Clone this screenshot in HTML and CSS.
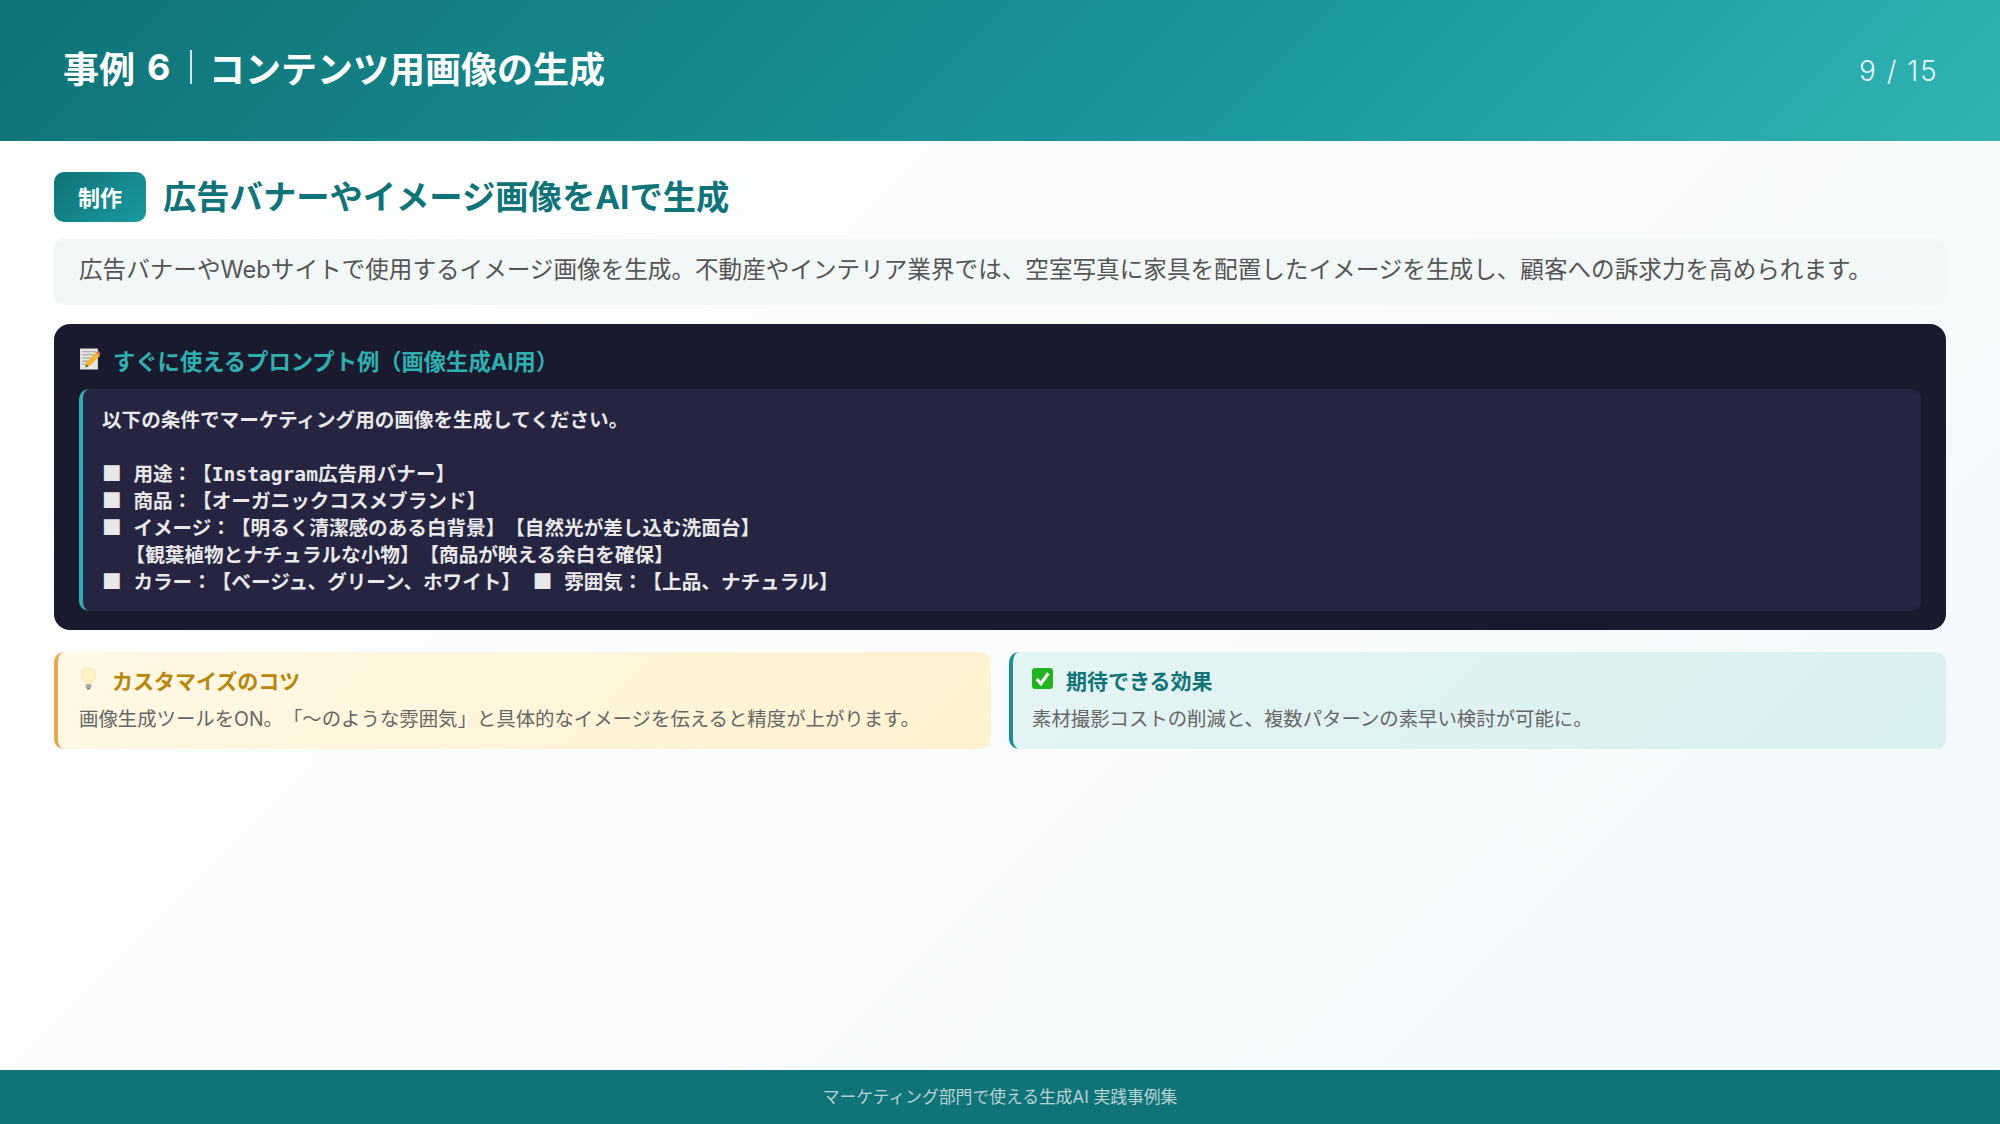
FILE: index.html
```html
<!DOCTYPE html>
<html lang="ja">
<head>
    <meta charset="UTF-8">
    <title>事例 6 | コンテンツ用画像の生成</title>
    <link rel="stylesheet" href="styles.css">
</head>
<body>
    <header class="header">
        <h1 class="slide-title">事例 <span class="num">6</span><span class="sep"></span>コンテンツ用画像の生成</h1>
        <div class="page-num">9 / 15</div>
    </header>

    <main class="content">
        <div class="case-head">
            <span class="badge">制作</span>
            <h2>広告バナーやイメージ画像をAIで生成</h2>
        </div>
        <p class="desc">広告バナーやWebサイトで使用するイメージ画像を生成。不動産やインテリア業界では、空室写真に家具を配置したイメージを生成し、顧客への訴求力を高められます。</p>

        <section class="prompt">
            <div class="prompt-title">
                <svg class="icon-memo" viewBox="0 0 20 20">
                    <rect x="1" y="0" width="17" height="20" fill="#e4e4e0"/>
                    <path d="M3 3h13M3 6h13M3 9h9M3 12h6M3 15h4" stroke="#9a9a9a" stroke-width="1"/>
                    <path d="M6 18l1-5L16 4l4 3-9 9z" fill="#f2b632"/>
                    <path d="M16 4l2-2 3 3-1 2z" fill="#e0705a"/>
                    <path d="M6 18l1-3 2 2z" fill="#4a4a4a"/>
                </svg>
                すぐに使えるプロンプト例（画像生成AI用）
            </div>
            <div class="prompt-body">
                <div class="line">以下の条件でマーケティング用の画像を生成してください。</div>
                <div class="line"></div>
                <div class="line"><span class="sq">■</span> 用途：【Instagram広告用バナー】</div>
                <div class="line"><span class="sq">■</span> 商品：【オーガニックコスメブランド】</div>
                <div class="line"><span class="sq">■</span> イメージ：【明るく清潔感のある白背景】【自然光が差し込む洗面台】</div>
                <div class="line">  【観葉植物とナチュラルな小物】【商品が映える余白を確保】</div>
                <div class="line"><span class="sq">■</span> カラー：【ベージュ、グリーン、ホワイト】 <span class="sq">■</span> 雰囲気：【上品、ナチュラル】</div>
            </div>
        </section>

        <div class="cards">
            <div class="card card-tip">
                <div class="card-title">
                    <svg class="icon-bulb" viewBox="0 0 20 24">
                        <path d="M10 1a7.500 7.500 0 0 0-4.500 13.500c1 1 1.500 2 1.500 3.500h6c0-1.500.5-2.500 1.500-3.500A7.500 7.500 0 0 0 10 1z" fill="#fdf3c4" stroke="#efe3a6" stroke-width=".8"/>
                        <rect x="7" y="18" width="6" height="4" rx="1" fill="#a5a5a5"/>
                        <rect x="8.500" y="22" width="3" height="1.500" fill="#777"/>
                    </svg>
                    カスタマイズのコツ
                </div>
                <p>画像生成ツールをON。「〜のような雰囲気」と具体的なイメージを伝えると精度が上がります。</p>
            </div>
            <div class="card card-effect">
                <div class="card-title">
                    <svg class="icon-check" viewBox="0 0 20 20">
                        <rect x="0" y="0" width="20" height="20" rx="3" fill="#22b322"/>
                        <path d="M4.500 10.500l4 4.500 7-10" fill="none" stroke="#fff" stroke-width="3"/>
                    </svg>
                    期待できる効果
                </div>
                <p>素材撮影コストの削減と、複数パターンの素早い検討が可能に。</p>
            </div>
        </div>
    </main>

    <footer class="footer">マーケティング部門で使える生成AI 実践事例集</footer>
</body>
</html>
```

FILE: styles.css
```css
* {
    margin: 0;
    padding: 0;
    box-sizing: border-box;
}

body {
    font-family: Inter, "Noto Sans CJK JP", sans-serif;
    text-spacing-trim: space-all;
    height: 100vh;
    display: flex;
    flex-direction: column;
    overflow: hidden;
    background: #fff;
}

.header {
    height: 141px;
    padding: 0 63px;
    display: flex;
    align-items: center;
    justify-content: space-between;
    background: linear-gradient(135deg, #0f7377 0%, #1a969c 60%, #31b3b3 100%);
    color: #fff;
}

.slide-title {
    font-size: 36px;
    font-weight: 700;
    display: flex;
    align-items: center;
    padding-bottom: 8px;
}

.slide-title .num {
    margin-left: 12px;
}

.sep {
    width: 1.500px;
    height: 34px;
    background: rgba(255, 255, 255, 0.8);
    margin: 0 17px 0 20px;
}

.page-num {
    font-size: 28px;
    font-weight: 300;
    letter-spacing: 1.500px;
    margin-right: -1px;
    color: rgba(255, 255, 255, 0.9);
}

.content {
    flex: 1;
    padding: 31px 54px 0;
    background: linear-gradient(135deg, #ffffff 0%, #f4f8fa 100%);
}

.case-head {
    height: 50px;
    display: flex;
    align-items: center;
    gap: 17px;
    margin-bottom: 17px;
}

.badge {
    width: 92px;
    height: 50px;
    padding-bottom: 2px;
    border-radius: 10px;
    display: flex;
    align-items: center;
    justify-content: center;
    background: linear-gradient(135deg, #0f7377, #1a9aa0);
    color: #fff;
    font-size: 22px;
    font-weight: 700;
}

h2 {
    font-size: 33.300px;
    font-weight: 700;
    color: #0f7377;
    padding-bottom: 5px;
}

.desc {
    height: 66px;
    padding: 0 25px 8px;
    display: flex;
    align-items: center;
    background: #f2f7f8;
    border-radius: 10px;
    font-size: 23.600px;
    color: #555;
    margin-bottom: 19px;
}

.prompt {
    height: 306px;
    background: #1a1a2e;
    border-radius: 16px;
    padding: 18px 25px 19px;
    margin-bottom: 22px;
}

.prompt-title {
    height: 47px;
    padding-bottom: 12px;
    display: flex;
    align-items: center;
    gap: 13px;
    font-size: 22.300px;
    font-weight: 700;
    color: #2fb0b0;
}

.icon-memo {
    width: 21px;
    height: 22px;
    margin-bottom: 1px;
}

.prompt-body {
    height: 222px;
    background: #252542;
    border-left: 4px solid #2fb0b0;
    border-radius: 10px;
    padding: 18px 19px;
    font-family: "DejaVu Sans Mono", "Noto Sans CJK JP", monospace;
    font-size: 19.600px;
    font-weight: 700;
    line-height: 27px;
    color: #e8e8e8;
}

.line {
    height: 27px;
    white-space: pre;
}

.sq {
    font-family: "Noto Sans CJK JP", sans-serif;
    line-height: 0;
}

.cards {
    display: grid;
    grid-template-columns: 1fr 1fr;
    gap: 18px;
}

.card {
    height: 97px;
    padding: 12px 20px;
    border-radius: 10px;
}

.card-tip {
    padding-left: 21px;
    background: linear-gradient(135deg, #fff8e5, #fff2d0);
    border-left: 4px solid #e8a84c;
}

.card-effect {
    padding-left: 19px;
    background: linear-gradient(135deg, #e5f4f4, #d9f0f0);
    border-left: 4px solid #1a8f96;
}

.card-title {
    display: flex;
    align-items: center;
    gap: 14px;
    font-size: 21px;
    font-weight: 700;
    height: 36px;
    padding-bottom: 5px;
    margin-bottom: 3px;
}

.card-tip .card-title {
    color: #b8860b;
}

.card-effect .card-title {
    gap: 13px;
    color: #0f7377;
}

.card p {
    font-size: 19.400px;
    color: #666;
}

.icon-bulb {
    width: 19px;
    height: 23px;
    margin-bottom: 3px;
}

.icon-check {
    width: 21px;
    height: 21px;
    margin-bottom: 3px;
}

.footer {
    height: 54px;
    padding-bottom: 2px;
    display: flex;
    align-items: center;
    justify-content: center;
    background: #0f7377;
    color: rgba(255, 255, 255, 0.7);
    font-size: 16.800px;
}
```
